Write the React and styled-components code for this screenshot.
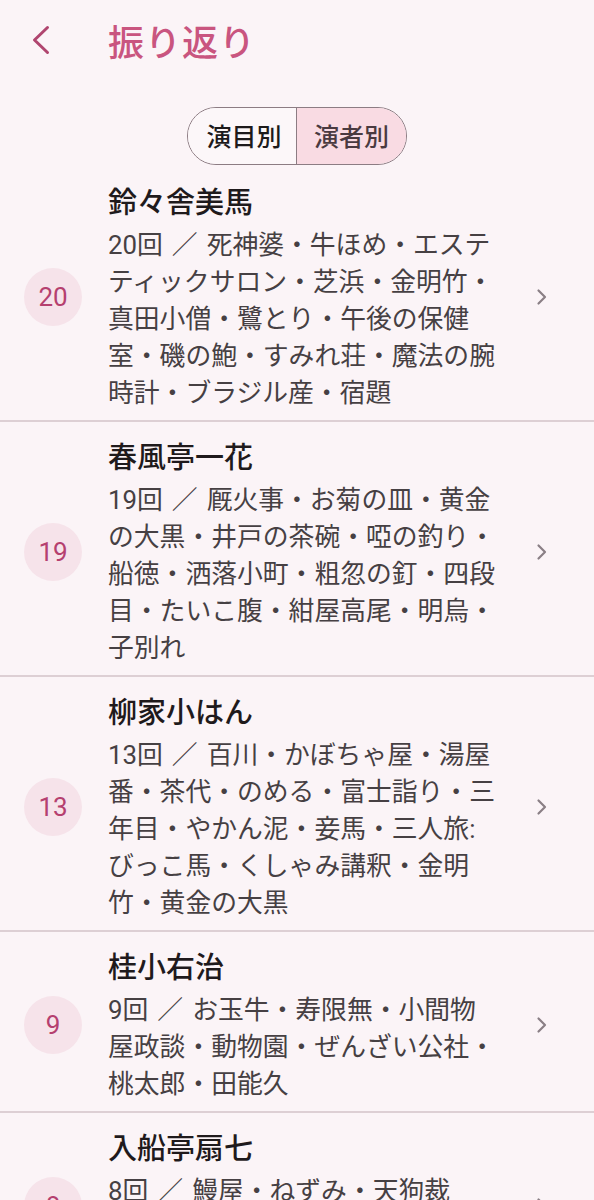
import React, { useState } from "react";
import styled, { createGlobalStyle } from "styled-components";

const GlobalStyle = createGlobalStyle`
  html, body {
    margin: 0;
    padding: 0;
    background: #fbf4f7;
  }
  body {
    font-family: Roboto, "Noto Sans CJK JP", sans-serif;
    overflow: hidden;
  }
`;

const Page = styled.div`
  height: 100vh;
  overflow: hidden;
  background: #fbf4f7;
`;

const Header = styled.header`
  height: 80px;
  display: flex;
  align-items: center;
  padding-left: 31px;
`;

const BackButton = styled.button`
  width: 24px;
  height: 34px;
  padding: 0;
  border: none;
  background: none;
  display: flex;
  align-items: center;
  justify-content: flex-start;
  cursor: pointer;
`;

const Title = styled.h1`
  margin: 0 0 0 53px;
  font-family: "Noto Sans CJK JP", sans-serif;
  font-size: 36px;
  font-weight: 500;
  color: #c9557f;
  letter-spacing: 1px;
  line-height: 1;
`;

const SegmentWrap = styled.div`
  display: flex;
  justify-content: center;
  margin-top: 27px;
  margin-bottom: 2px;
`;

const Segment = styled.div`
  display: flex;
  height: 58px;
  border: 1.5px solid #8c7c83;
  border-radius: 29px;
  overflow: hidden;
  box-sizing: border-box;
`;

const SegButton = styled.button`
  width: ${(p) => (p.$first ? "108px" : "110px")};
  border: none;
  border-left: ${(p) => (p.$first ? "none" : "1.5px solid #8c7c83")};
  background: ${(p) => (p.$active ? "#f9dbe3" : "#fcf7f9")};
  color: ${(p) => (p.$active ? "#4a3a40" : "#1d1a1b")};
  font-family: "Noto Sans CJK JP", sans-serif;
  font-size: 25px;
  font-weight: 500;
  padding: 0 0 2px ${(p) => (p.$first ? "4px" : "0")};
  cursor: pointer;
`;

const List = styled.ul`
  list-style: none;
  margin: 0;
  padding: 0;
`;

const Row = styled.li`
  display: grid;
  grid-template-columns: 58px 390px 1fr;
  column-gap: 26px;
  align-items: center;
  padding: 15px 0 8px 24px;
  border-bottom: 2px solid #ddcfd4;
`;

const Count = styled.div`
  width: 58px;
  height: 58px;
  border-radius: 50%;
  background: #f6e3ea;
  color: #b5406f;
  font-family: Roboto, sans-serif;
  font-size: 26px;
  display: flex;
  align-items: center;
  justify-content: center;
`;

const Info = styled.div`
  min-width: 0;
`;

const Name = styled.div`
  font-family: "Noto Sans CJK JP", sans-serif;
  font-size: 29px;
  font-weight: 500;
  line-height: 36px;
  color: #1f1a1c;
  margin-bottom: 9px;
`;

const Detail = styled.div`
  font-size: 25.8px;
  line-height: 37px;
  color: #464043;
`;

const Slash = styled.span`
  margin: 0 9px;
`;

const Chevron = styled.div`
  padding-left: 12px;
  display: flex;
  align-items: center;
`;

const performers = [
  {
    name: "鈴々舎美馬",
    count: 20,
    titles:
      "死神婆・牛ほめ・エステティックサロン・芝浜・金明竹・真田小僧・鷺とり・午後の保健室・磯の鮑・すみれ荘・魔法の腕時計・ブラジル産・宿題",
  },
  {
    name: "春風亭一花",
    count: 19,
    titles:
      "厩火事・お菊の皿・黄金の大黒・井戸の茶碗・啞の釣り・船徳・洒落小町・粗忽の釘・四段目・たいこ腹・紺屋高尾・明烏・子別れ",
  },
  {
    name: "柳家小はん",
    count: 13,
    titles:
      "百川・かぼちゃ屋・湯屋番・茶代・のめる・富士詣り・三年目・やかん泥・妾馬・三人旅:びっこ馬・くしゃみ講釈・金明竹・黄金の大黒",
  },
  {
    name: "桂小右治",
    count: 9,
    titles: "お玉牛・寿限無・小間物屋政談・動物園・ぜんざい公社・桃太郎・田能久",
  },
  {
    name: "入船亭扇七",
    count: 8,
    titles: "鰻屋・ねずみ・天狗裁き・たらちね・子ほめ・道灌・転失気・元犬",
  },
];

const BackIcon = () => (
  <svg width="20" height="32" viewBox="0 0 20 32">
    <path
      d="M16.5 3.5 L3.5 16 L16.5 28.5"
      fill="none"
      stroke="#b0456f"
      strokeWidth="3"
      strokeLinecap="round"
      strokeLinejoin="round"
    />
  </svg>
);

const NextIcon = () => (
  <svg width="12" height="18" viewBox="0 0 12 18">
    <path
      d="M2.5 2.5 L9 9 L2.5 15.5"
      fill="none"
      stroke="#8a7f85"
      strokeWidth="2.2"
      strokeLinecap="round"
      strokeLinejoin="round"
    />
  </svg>
);

export default function App() {
  const [mode, setMode] = useState("performer");

  return (
    <Page lang="ja">
      <GlobalStyle />
      <Header>
        <BackButton aria-label="戻る">
          <BackIcon />
        </BackButton>
        <Title>振り返り</Title>
      </Header>

      <SegmentWrap>
        <Segment>
          <SegButton $first $active={mode === "title"} onClick={() => setMode("title")}>
            演目別
          </SegButton>
          <SegButton $active={mode === "performer"} onClick={() => setMode("performer")}>
            演者別
          </SegButton>
        </Segment>
      </SegmentWrap>

      <List>
        {performers.map((p) => (
          <Row key={p.name}>
            <Count>{p.count}</Count>
            <Info>
              <Name>{p.name}</Name>
              <Detail>
                {p.count}回<Slash>／</Slash>{p.titles}
              </Detail>
            </Info>
            <Chevron>
              <NextIcon />
            </Chevron>
          </Row>
        ))}
      </List>
    </Page>
  );
}
